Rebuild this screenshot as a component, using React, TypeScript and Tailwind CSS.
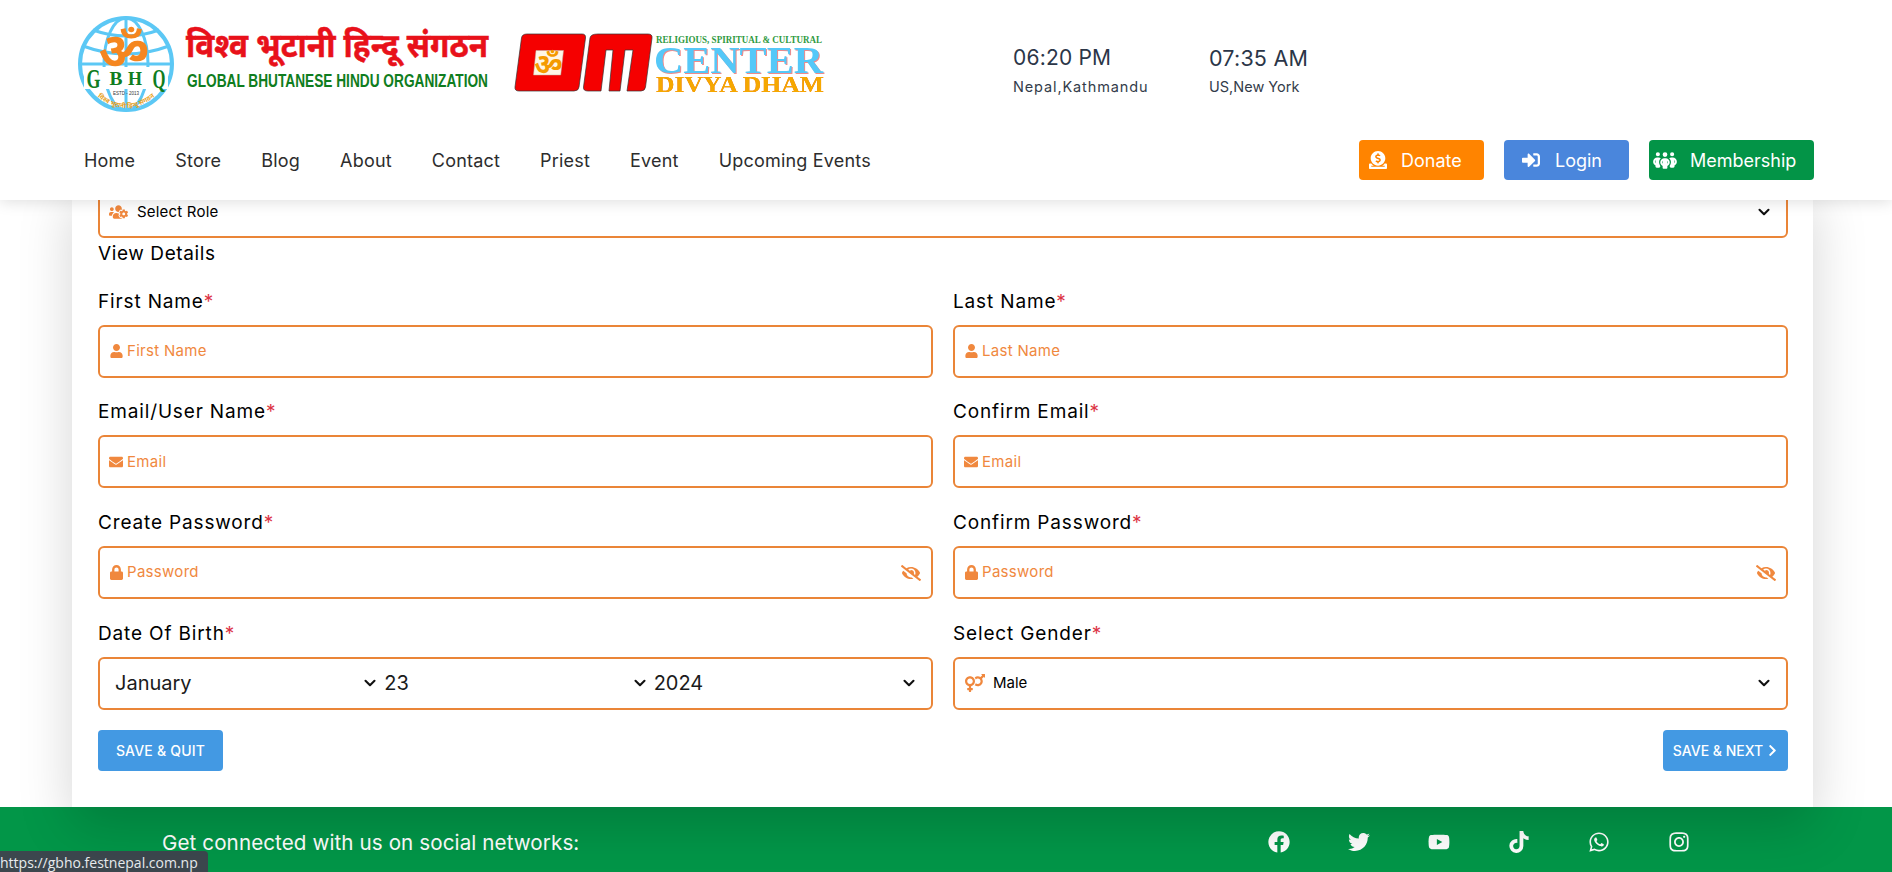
// App.tsx
import React from 'react';
import {
  FaDonate,
  FaSignInAlt,
  FaUsersCog,
  FaUser,
  FaEnvelope,
  FaLock,
  FaEyeSlash,
  FaVenusMars,
  FaChevronRight,
  FaFacebook,
  FaTwitter,
  FaYoutube,
  FaTiktok,
  FaWhatsapp,
  FaInstagram,
} from 'react-icons/fa';
import { FaPeopleGroup } from 'react-icons/fa6';

const navItems = ['Home', 'Store', 'Blog', 'About', 'Contact', 'Priest', 'Event', 'Upcoming Events'];

const Chevron = () => (
  <svg viewBox="0 0 16 16" className="w-3 h-3 shrink-0 pointer-events-none" fill="none" stroke="#111" strokeWidth="2.8" strokeLinecap="round" strokeLinejoin="round">
    <path d="M2 5l6 6 6-6" />
  </svg>
);

const GbhoLogo = () => (
  <svg viewBox="72 14 425 100" className="w-[425px] h-[100px] shrink-0">
    <defs>
      <path id="globe-arc" d="M90 90 Q126 126 162 90" />
    </defs>
    <circle cx="126" cy="64" r="46" fill="#fff" stroke="#5cc8f5" strokeWidth="4" />
    <ellipse cx="126" cy="64" rx="22" ry="46" fill="none" stroke="#5cc8f5" strokeWidth="3" />
    <path d="M126 18V110M83 46Q126 62 169 46M80 64H172M85 88Q126 72 167 88M93 30Q126 42 159 30" fill="none" stroke="#5cc8f5" strokeWidth="3" />
    <rect x="84" y="67" width="84" height="22" fill="#fff" />
    <text x="124" y="68" textAnchor="middle" fontSize="50" fontWeight="700" fill="#f5861f" fontFamily="'Noto Sans',sans-serif">ॐ</text>
    <text x="93.5" y="88" textAnchor="middle" textLength="14" lengthAdjust="spacingAndGlyphs" fontSize="28" fontWeight="700" fill="#0f7d20" fontFamily="'Liberation Serif',serif">G</text>
    <text x="116" y="85" textAnchor="middle" textLength="13" lengthAdjust="spacingAndGlyphs" fontSize="19" fontWeight="700" fill="#0f7d20" fontFamily="'Liberation Serif',serif">B</text>
    <text x="135" y="85" textAnchor="middle" textLength="14" lengthAdjust="spacingAndGlyphs" fontSize="19" fontWeight="700" fill="#0f7d20" fontFamily="'Liberation Serif',serif">H</text>
    <text x="159" y="88" textAnchor="middle" textLength="13" lengthAdjust="spacingAndGlyphs" fontSize="28" fontWeight="700" fill="#0f7d20" fontFamily="'Liberation Serif',serif">Q</text>
    <text x="126" y="95" textAnchor="middle" fontSize="4.5" fill="#333" fontFamily="'Liberation Sans',sans-serif">ESTD - 2013</text>
    <text fontSize="6.5" fontWeight="700" fill="#e8a020" fontFamily="'Noto Sans',sans-serif">
      <textPath href="#globe-arc" startOffset="50%" textAnchor="middle">विश्व भूटानी हिन्दू संगठन</textPath>
    </text>
    <text x="186" y="57" textLength="302" lengthAdjust="spacingAndGlyphs" fontSize="33" fontWeight="700" fill="#e8111a" stroke="#e8111a" strokeWidth="0.5" fontFamily="'Noto Sans',sans-serif">विश्व भूटानी हिन्दू संगठन</text>
    <text x="187" y="87" textLength="301" lengthAdjust="spacingAndGlyphs" fontSize="18" fontWeight="700" fill="#0f7d20" fontFamily="'Liberation Sans',sans-serif">GLOBAL BHUTANESE HINDU ORGANIZATION</text>
  </svg>
);

const OmLogo = () => (
  <svg viewBox="510 24 320 76" className="w-[320px] h-[76px] shrink-0 ml-[13px]">
    <path
      d="M527 34H582Q586 34 585.5 38L579 87Q578.5 91 574 91H519Q514.5 91 515 87L521.5 38Q522 34 527 34Z"
      fill="#f50000"
      stroke="#333"
      strokeWidth="0.7"
    />
    <path d="M536 50.5H563.5L560.7 75H533.5Z" fill="#fff6e6" stroke="#b9b0a0" strokeWidth="0.5" />
    <text x="548.5" y="74" textAnchor="middle" fontSize="28" fontWeight="700" fill="#f59a00" fontFamily="'Noto Sans',sans-serif">ॐ</text>
    <path
      d="M598 34H648Q652.5 34 652 38L645.5 87Q645 91 641 91H627L633 50H625L620 91H609L613 50H606L601 91H588Q583 91 583.5 87L590 38Q590.5 34 598 34Z"
      fill="#f50000"
      stroke="#333"
      strokeWidth="0.7"
    />
    <text x="656" y="43" textLength="166" lengthAdjust="spacingAndGlyphs" fontSize="10" fontWeight="700" fill="#2f9a3f" fontFamily="'Liberation Serif',serif">RELIGIOUS, SPIRITUAL &amp; CULTURAL</text>
    <text x="654" y="73" textLength="169" lengthAdjust="spacingAndGlyphs" fontSize="38" fontWeight="700" fill="#55c8f8" fontFamily="'Liberation Serif',serif" className="[filter:drop-shadow(1.5px_1.5px_0_#f08a8a)]">CENTER</text>
    <text x="656" y="92" textLength="168" lengthAdjust="spacingAndGlyphs" fontSize="23" fontWeight="700" fill="#f5a800" fontFamily="'Liberation Serif',serif" className="[filter:drop-shadow(0.8px_0.8px_0_#ee5a20)]">DIVYA DHAM</text>
  </svg>
);

const Header = () => (
  <header className="relative z-20 h-[200px] bg-white shadow-[0_2px_14px_rgba(0,0,0,0.13)]">
    <div className="h-[126px] pl-[72px] flex items-start">
      <div className="pt-[14px] flex">
        <GbhoLogo />
        <div className="pt-[10px]">
          <OmLogo />
        </div>
      </div>
      <div className="ml-[183px] pt-[43px] w-[196px] text-[#2b3648]">
        <div className="text-[21px] leading-[30px] tracking-[0.2px]">06:20 PM</div>
        <div className="text-[14.5px] leading-[20px] mt-[4px] text-[#333c4a] tracking-[0.87px]">Nepal,Kathmandu</div>
      </div>
      <div className="pt-[43px] text-[#2b3648]">
        <div className="text-[21.5px] leading-[30px] tracking-[0.2px]">07:35 AM</div>
        <div className="text-[14.5px] leading-[20px] mt-[4px] text-[#333c4a]">US,New York</div>
      </div>
    </div>
    <div className="h-[68px] pl-[84px] pr-[78px] flex items-center">
      <nav className="flex items-center gap-10 text-[18px] tracking-[0.2px] text-[#2d2d2d]">
        {navItems.map((item) => (
          <a key={item}>{item}</a>
        ))}
      </nav>
      <div className="ml-auto flex gap-5 text-[18px] text-white">
        <button className="h-10 w-[125px] rounded bg-[#ff8400] flex items-center pl-[10px] gap-[14px]">
          <FaDonate className="w-[18px] h-[20px]" />
          <span>Donate</span>
        </button>
        <button className="h-10 w-[125px] rounded bg-[#4a86dc] flex items-center pl-[18px] gap-[15px]">
          <FaSignInAlt className="w-[18px] h-[18px]" />
          <span>Login</span>
        </button>
        <button className="h-10 w-[165px] rounded bg-[#039447] flex items-center pl-[4px] gap-[13px]">
          <FaPeopleGroup className="w-[24px] h-[19px]" />
          <span>Membership</span>
        </button>
      </div>
    </div>
  </header>
);

const Label = ({ text }: { text: string }) => (
  <label className="block text-[19px] leading-[27px] mb-[10px] text-black tracking-[0.85px]">
    {text}
    <span className="text-[#dc3545]">*</span>
  </label>
);

const shell = 'h-[53px] border-2 border-[#ea8538] rounded-md bg-white flex items-center';

const TextField = ({ label, placeholder, icon, eye }: { label: string; placeholder: string; icon: React.ReactNode; eye?: boolean }) => (
  <div>
    <Label text={label} />
    <div className={`${shell} pl-[9px] pr-[10px]`}>
      <span className="text-[#f0883e] w-[14px] flex justify-center shrink-0">{icon}</span>
      <input
        placeholder={placeholder}
        className="ml-[4px] flex-1 min-w-0 outline-none bg-transparent text-[15px] tracking-[0.3px] placeholder:text-[#f0883e]"
      />
      {eye && <FaEyeSlash className="w-[20px] h-[16px] text-[#f0883e] shrink-0" />}
    </div>
  </div>
);

const dateParts = [
  { value: 'January', options: ['January', 'February', 'March'] },
  { value: '23', options: ['22', '23', '24'] },
  { value: '2024', options: ['2023', '2024', '2025'] },
];

const Form = () => (
  <div className="relative z-10 ml-[72px] w-[1741px] -mt-[15px] bg-white pl-[26px] pr-[25px] pb-[36px] shadow-[0_18px_50px_rgba(0,0,0,0.17)]">
    <div className={`${shell} pl-[9px] pr-[16px]`}>
      <FaUsersCog className="w-[19px] h-[16px] text-[#f0883e] shrink-0" />
      <select defaultValue="Select Role" className="ml-[9px] flex-1 appearance-none outline-none bg-transparent text-[15px] leading-[20px] text-black tracking-[0.2px]">
        <option>Select Role</option>
      </select>
      <Chevron />
    </div>
    <h3 className="pt-[2px] text-[19px] leading-[27px] mb-[20.5px] text-black tracking-[0.6px]">View Details</h3>
    <div className="grid grid-cols-2 gap-x-5 gap-y-[20.75px]">
      <TextField label="First Name" placeholder="First Name" icon={<FaUser className="w-[13px] h-[14px]" />} />
      <TextField label="Last Name" placeholder="Last Name" icon={<FaUser className="w-[13px] h-[14px]" />} />
      <TextField label="Email/User Name" placeholder="Email" icon={<FaEnvelope className="w-[14px] h-[14px]" />} />
      <TextField label="Confirm Email" placeholder="Email" icon={<FaEnvelope className="w-[14px] h-[14px]" />} />
      <TextField label="Create Password" placeholder="Password" icon={<FaLock className="w-[13px] h-[15px]" />} eye />
      <TextField label="Confirm Password" placeholder="Password" icon={<FaLock className="w-[13px] h-[15px]" />} eye />
      <div>
        <Label text="Date Of Birth" />
        <div className={`${shell} pl-[15px] pr-[8px] grid grid-cols-3`}>
          {dateParts.map((part) => (
            <div key={part.value} className="flex items-center pr-[8px]">
              <select defaultValue={part.value} className="flex-1 min-w-0 appearance-none outline-none bg-transparent text-[20px] text-[#1b1b1b]">
                {part.options.map((o) => (
                  <option key={o}>{o}</option>
                ))}
              </select>
              <Chevron />
            </div>
          ))}
        </div>
      </div>
      <div>
        <Label text="Select Gender" />
        <div className={`${shell} pl-[10px] pr-[16px]`}>
          <FaVenusMars className="w-[20px] h-[18px] text-[#f0883e] shrink-0" />
          <select defaultValue="Male" className="ml-[8px] flex-1 appearance-none outline-none bg-transparent text-[15px] text-black">
            <option>Male</option>
            <option>Female</option>
          </select>
          <Chevron />
        </div>
      </div>
    </div>
    <div className="mt-[20px] flex justify-between">
      <button className="h-[41px] w-[125px] rounded bg-[#4399e3] text-white text-[14px] font-medium tracking-[0.2px]">SAVE &amp; QUIT</button>
      <button className="h-[41px] w-[125px] rounded bg-[#4399e3] text-white text-[14px] font-medium flex items-center justify-center gap-[4px]">
        SAVE &amp; NEXT
        <FaChevronRight className="w-[11px] h-[13px]" />
      </button>
    </div>
  </div>
);

const Footer = () => (
  <footer className="relative h-[100px] bg-[#029648] text-white flex items-start pt-[21px] pl-[162px] pr-[202px]">
    <span className="text-[20.6px] leading-[30px] tracking-[0.1px]">Get connected with us on social networks:</span>
    <div className="ml-auto flex gap-[58px] pt-[3px]">
      <FaFacebook className="w-[22px] h-[22px]" />
      <FaTwitter className="w-[22px] h-[22px]" />
      <FaYoutube className="w-[22px] h-[22px]" />
      <FaTiktok className="w-[22px] h-[22px]" />
      <FaWhatsapp className="w-[22px] h-[22px]" />
      <FaInstagram className="w-[22px] h-[22px]" />
    </div>
  </footer>
);

const App: React.FC = () => {
  return (
    <div className="relative h-[872px] overflow-hidden bg-white [font-family:Inter,'Noto_Sans',sans-serif]">
      <Header />
      <Form />
      <Footer />
      <div className="absolute left-0 bottom-0 w-[208px] h-[21px] bg-[#3c474e] rounded-tr-sm overflow-hidden text-[14px] leading-[24px] text-[#e8ecee] whitespace-nowrap [font-family:'Open_Sans',sans-serif]">
        https://gbho.festnepal.com.np
      </div>
    </div>
  );
};

export default App;
